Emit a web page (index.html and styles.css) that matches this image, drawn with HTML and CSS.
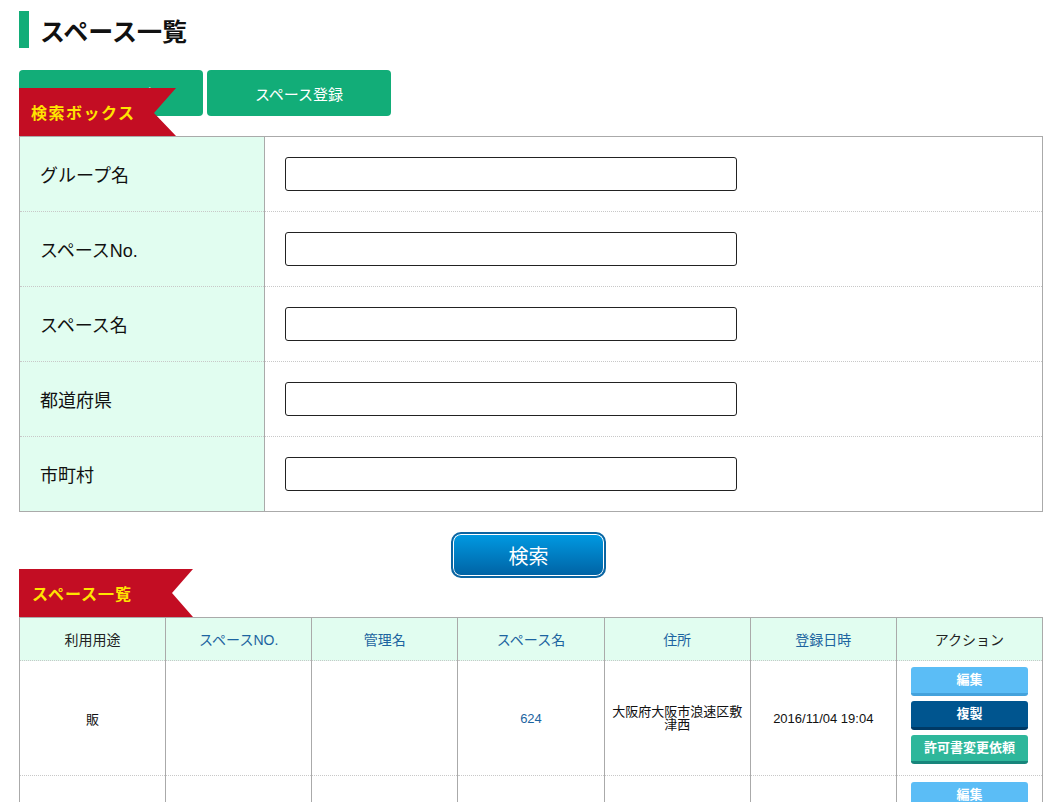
FILE: index.html
```html
<!DOCTYPE html>
<html lang="ja">
<head>
<meta charset="utf-8">
<title>スペース一覧</title>
<link rel="stylesheet" href="styles.css">
</head>
<body>
<h1 class="page-title">スペース一覧</h1>
<div class="tabs">
  <a class="tab">スペース一覧</a>
  <a class="tab">スペース登録</a>
</div>

<section class="search-section">
  <div class="ribbon ribbon-search">検索ボックス</div>
  <table class="search-table">
    <tr><th>グループ名</th><td><input class="field" type="text"></td></tr>
    <tr><th>スペースNo.</th><td><input class="field" type="text"></td></tr>
    <tr><th>スペース名</th><td><input class="field" type="text"></td></tr>
    <tr><th>都道府県</th><td><input class="field" type="text"></td></tr>
    <tr><th>市町村</th><td><input class="field" type="text"></td></tr>
  </table>
  <div class="search-actions">
    <button class="search-btn" type="button">検索</button>
  </div>
</section>

<section class="list-section">
  <div class="ribbon ribbon-list">スペース一覧</div>
  <table class="list-table">
    <thead>
      <tr>
        <th>利用用途</th>
        <th class="link">スペースNO.</th>
        <th class="link">管理名</th>
        <th class="link">スペース名</th>
        <th class="link">住所</th>
        <th class="link">登録日時</th>
        <th>アクション</th>
      </tr>
    </thead>
    <tbody>
      <tr>
        <td>販</td>
        <td></td>
        <td></td>
        <td class="link">624</td>
        <td class="addr">大阪府大阪市浪速区敷津西</td>
        <td>2016/11/04 19:04</td>
        <td class="actions">
          <a class="act act-edit">編集</a>
          <a class="act act-copy">複製</a>
          <a class="act act-permit">許可書変更依頼</a>
        </td>
      </tr>
      <tr>
        <td></td>
        <td></td>
        <td></td>
        <td></td>
        <td></td>
        <td></td>
        <td class="actions">
          <a class="act act-edit">編集</a>
          <a class="act act-copy">複製</a>
          <a class="act act-permit">許可書変更依頼</a>
        </td>
      </tr>
    </tbody>
  </table>
</section>
</body>
</html>
```
FILE: styles.css
```css
* { box-sizing: border-box; }

body {
  margin: 0;
  padding: 11px 10px 0 19px;
  font-family: "Liberation Sans", "Noto Sans CJK JP", sans-serif;
  color: #222;
  background: #fff;
}

.page-title {
  margin: 0;
  height: 37px;
  display: flex;
  align-items: center;
  border-left: 10px solid #12ad78;
  padding-left: 11px;
  font-size: 25px;
  font-weight: bold;
  color: #111;
}

.tabs {
  display: flex;
  gap: 4px;
  margin-top: 22px;
}

.tab {
  width: 184px;
  height: 46px;
  display: flex;
  align-items: center;
  justify-content: center;
  background: #12ad78;
  color: #fff;
  border-radius: 4px;
  font-size: 15px;
}

.search-section {
  margin-top: -28px;
}

.ribbon {
  position: relative;
  z-index: 1;
  height: 48px;
  display: flex;
  align-items: center;
  background: #c30d23;
  color: #ffe400;
  font-size: 16px;
  font-weight: bold;
  letter-spacing: 1.5px;
}

.ribbon-search {
  width: 157px;
  padding-left: 12px;
  clip-path: polygon(0 0, 100% 0, 135px 52%, 100% 100%, 0 100%);
}

.ribbon-list {
  width: 174px;
  padding-left: 13px;
  letter-spacing: 1px;
  clip-path: polygon(0 0, 100% 0, 153px 50%, 100% 100%, 0 100%);
}

.search-table {
  width: 100%;
  border-collapse: collapse;
  border: 1px solid #aaa;
}

.search-table tr {
  height: 75px;
  border-bottom: 1px dotted #c8c8c8;
}

.search-table th {
  width: 245px;
  background: #e1fdf0;
  border-right: 1px solid #aaa;
  text-align: left;
  padding: 0 0 0 20px;
  font-size: 18px;
  font-weight: normal;
  color: #111;
}

.search-table td {
  padding: 0 0 0 20px;
}

.field {
  display: block;
  width: 452px;
  height: 34px;
  border: 1px solid #222;
  border-radius: 3px;
  background: #fff;
}

.search-actions {
  padding-top: 20px;
  display: flex;
  justify-content: center;
  padding-right: 5px;
}

.search-btn {
  width: 155px;
  height: 46px;
  border: 2px solid #0b65a2;
  border-radius: 10px;
  box-shadow: inset 0 0 0 1px #fff;
  background: linear-gradient(#009ae2, #0062a3);
  color: #fff;
  font-family: inherit;
  font-size: 20px;
}

.list-section {
  margin-top: -9px;
}

.list-table {
  width: 100%;
  border-collapse: collapse;
  table-layout: fixed;
  border: 1px solid #aaa;
}

.list-table th,
.list-table td {
  border-left: 1px solid #aaa;
  border-right: 1px solid #aaa;
  border-bottom: 1px dotted #c8c8c8;
  text-align: center;
  vertical-align: middle;
}

.list-table th {
  height: 43px;
  background: #e1fdf0;
  font-size: 14px;
  font-weight: normal;
  color: #222;
}

.list-table td {
  font-size: 13px;
  color: #111;
  padding: 0 6px;
}

.list-table .link {
  color: #1c64a0;
}

.list-table td.addr {
  line-height: 13px;
}

.list-table td.actions {
  padding: 6px 0;
}

.act {
  display: block;
  width: 117px;
  height: 29px;
  margin: 0 auto 5px;
  border-radius: 3px;
  border-bottom: 3px solid;
  line-height: 26px;
  color: #fff;
  font-size: 13px;
  font-weight: bold;
}

.act-edit {
  background: #5bbdf6;
  border-bottom-color: #44a2dc;
}

.act-copy {
  background: #00558f;
  border-bottom-color: #003a66;
}

.act-permit {
  background: #2eb79b;
  border-bottom-color: #18857b;
}
```
